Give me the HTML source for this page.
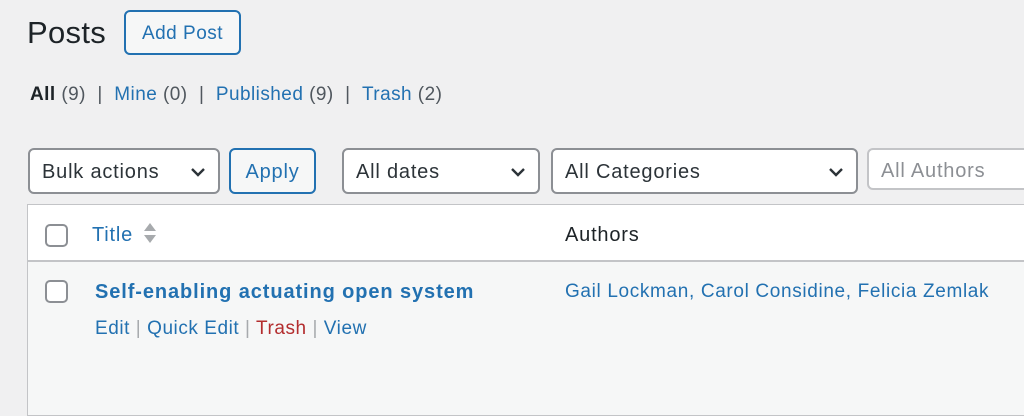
<!DOCTYPE html>
<html><head><style>
body{margin:0;width:1024px;height:406px;background:#f0f0f1;font-family:"Liberation Sans",sans-serif;position:relative;overflow:hidden;color:#1d2327;letter-spacing:0.8px}
.a{position:absolute;white-space:nowrap}
.box{position:absolute;box-sizing:border-box;border:2px solid #8c8f94;border-radius:6px;background:#fff}
.sel{font-size:20px;color:#2c3338;line-height:44px;padding-left:12px}
.chev{position:absolute;right:12px;top:15px}
.blue{color:#2271b1}
.cb{position:absolute;width:23px;height:23px;box-sizing:border-box;border:2px solid #8c8f94;border-radius:5px;background:#fff}
</style></head><body>
<div class="a" style="left:27px;top:15px;font-size:31px;letter-spacing:0.3px">Posts</div>
<div class="box" style="left:124px;top:10px;width:117px;height:45px;border-color:#2271b1;background:#f6f7f7;color:#2271b1;font-size:19px;text-align:center;line-height:44px;letter-spacing:0.5px">Add Post</div>
<div class="a" style="left:30px;top:84px;font-size:19px;color:#50575e;letter-spacing:0.45px"><b style="color:#1d2327">All</b> (9) &nbsp;| &nbsp;<span class="blue">Mine</span> (0) &nbsp;| &nbsp;<span class="blue">Published</span> (9) &nbsp;| &nbsp;<span class="blue">Trash</span> (2)</div>

<div class="box sel" style="left:28px;top:148px;width:192px;height:46px">Bulk actions<svg class="chev" width="16" height="14" viewBox="0 0 16 14"><path d="M2 4l6 6 6-6" fill="none" stroke="#2c3338" stroke-width="2.4"/></svg></div>
<div class="box" style="left:229px;top:148px;width:87px;height:46px;border-color:#2271b1;background:#f6f7f7;color:#2271b1;font-size:20px;text-align:center;line-height:44px">Apply</div>
<div class="box sel" style="left:342px;top:148px;width:198px;height:46px">All dates<svg class="chev" width="16" height="14" viewBox="0 0 16 14"><path d="M2 4l6 6 6-6" fill="none" stroke="#2c3338" stroke-width="2.4"/></svg></div>
<div class="box sel" style="left:551px;top:148px;width:307px;height:46px">All Categories<svg class="chev" width="16" height="14" viewBox="0 0 16 14"><path d="M2 4l6 6 6-6" fill="none" stroke="#2c3338" stroke-width="2.4"/></svg></div>
<div class="box sel" style="left:867px;top:148px;width:200px;height:42px;line-height:42px;color:#8c8f94;border-color:#c3c4c7">All Authors</div>

<div style="position:absolute;left:27px;top:204px;width:1010px;height:210px;border:1px solid #c3c4c7;background:#f6f7f7"></div>
<div style="position:absolute;left:28px;top:205px;width:1000px;height:55px;background:#fff;border-bottom:2px solid #c3c4c7"></div>
<div class="cb" style="left:45px;top:224px"></div>
<div class="a blue" style="left:92px;top:224px;font-size:20px">Title</div>
<svg class="a" style="left:143px;top:221px" width="14" height="26" viewBox="0 0 14 26"><path d="M7 2l6 8H1z M1 14h12l-6 8z" fill="#a7aaad"/></svg>
<div class="a" style="left:565px;top:224px;font-size:20px">Authors</div>

<div class="cb" style="left:45px;top:280px"></div>
<div class="a blue" style="left:95px;top:281px;font-size:20px;font-weight:bold;letter-spacing:0.9px">Self-enabling actuating open system</div>
<div class="a" style="left:95px;top:318px;font-size:19px;color:#a7aaad;letter-spacing:0.55px"><span class="blue">Edit</span> | <span class="blue">Quick Edit</span> | <span style="color:#b32d2e">Trash</span> | <span class="blue">View</span></div>
<div class="a blue" style="left:565px;top:281px;font-size:19px;letter-spacing:0.65px">Gail Lockman, Carol Considine, Felicia Zemlak</div>
</body></html>
